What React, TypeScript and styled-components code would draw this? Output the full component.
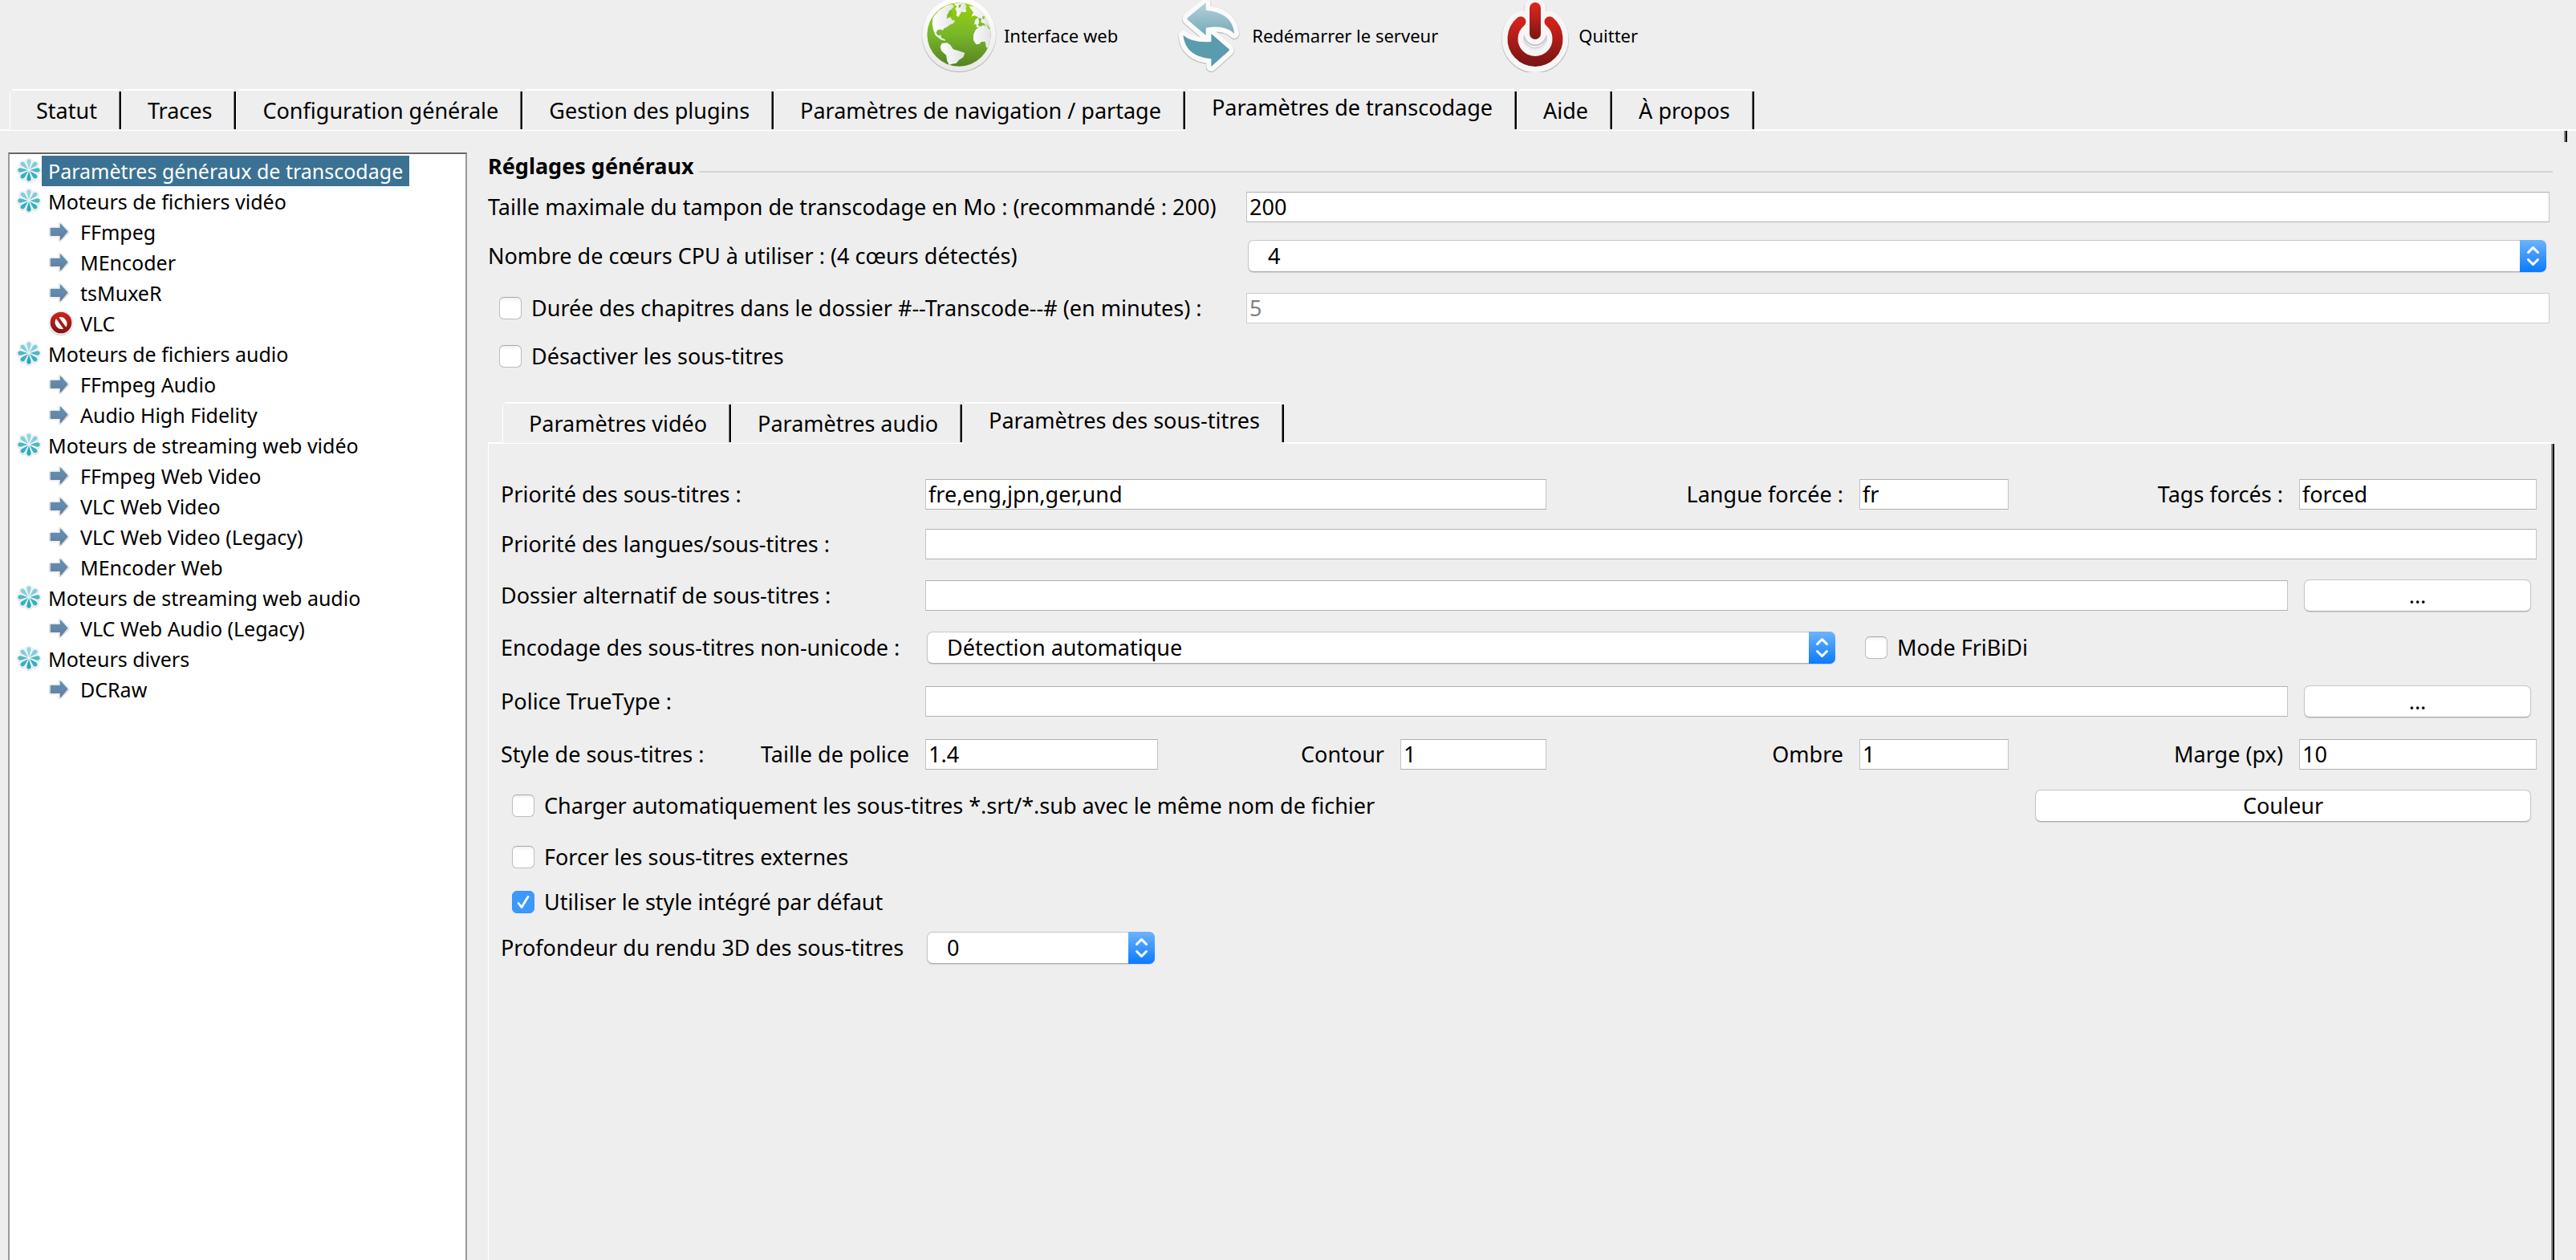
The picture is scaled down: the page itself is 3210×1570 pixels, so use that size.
import React, { useState } from "react";
import styled, { createGlobalStyle, css } from "styled-components";

const GlobalStyle = createGlobalStyle`
  *, *::before, *::after { box-sizing: border-box; }
  html, body, #root { height: 100%; margin: 0; }
  body {
    background: #eeeeee;
    color: #000;
    font-family: "Noto Sans", "Open Sans", sans-serif;
    font-size: 27px;
    line-height: 40px;
    overflow: hidden;
  }
  button, input, select { font: inherit; color: inherit; margin: 0; }
`;

const Window = styled.div`
  display: flex;
  flex-direction: column;
  height: 100vh;
`;

/* ---------- toolbar ---------- */

const Toolbar = styled.header`
  display: flex;
  justify-content: center;
  gap: 71px;
  height: 111px;
  padding-right: 22px;
`;

const ToolButton = styled.button`
  display: flex;
  align-items: center;
  gap: 8px;
  height: 90px;
  padding: 0 0 2px;
  border: 0;
  background: none;
  font-size: 22px;
  line-height: 30px;
  white-space: nowrap;

  svg { display: block; flex: none; margin-bottom: -2px; }
`;

const GlobeIcon = () => (
  <svg width="96" height="90" viewBox="24 0 288 270" aria-hidden="true">
    <defs>
      <linearGradient id="globeSea" x1="0" y1="0" x2="0" y2="1">
        <stop offset="0" stopColor="#9bd00a" />
        <stop offset="0.5" stopColor="#78b72a" />
        <stop offset="1" stopColor="#558222" />
      </linearGradient>
      <linearGradient id="globeRim" x1="0" y1="0" x2="0" y2="1">
        <stop offset="0" stopColor="#ffffff" />
        <stop offset="1" stopColor="#e9e9e9" />
      </linearGradient>
      <linearGradient id="globeLand" x1="0" y1="0" x2="1" y2="0">
        <stop offset="0" stopColor="#ffffff" />
        <stop offset="1" stopColor="#e2e2e2" />
      </linearGradient>
      <clipPath id="globeClip"><circle cx="168" cy="129" r="119" /></clipPath>
    </defs>
    <circle cx="168" cy="131" r="139" fill="#b5b5b5" />
    <circle cx="168" cy="129" r="138" fill="url(#globeRim)" />
    <circle cx="168" cy="129" r="119" fill="url(#globeSea)" />
    <g clipPath="url(#globeClip)" fill="url(#globeLand)">
      <path d="M70 66 L92 40 L122 20 L142 16 L150 24 L140 34 L134 46 L124 54 L122 70 L136 64 L142 74 L154 78 L146 88 L132 94 L122 102 L112 106 L108 114 L100 110 L88 112 L82 122 L88 132 L100 132 L102 142 L116 148 L118 152 L104 150 L92 142 L80 132 L72 112 L68 90 Z" />
      <path d="M148 14 L176 10 L192 14 L196 26 L190 38 L176 46 L166 64 L158 58 L160 44 L154 34 L160 24 Z" />
      <path d="M104 162 L124 160 L136 168 L146 184 L166 190 L190 198 L184 214 L168 224 L158 236 L138 240 L132 244 L124 228 L120 206 L102 190 L98 174 Z" />
      <path d="M180 36 L194 34 L196 44 L184 46 Z" />
      <path d="M206 22 L230 26 L262 50 L286 92 L290 140 L288 180 L270 178 L266 156 L252 156 L244 164 L232 166 L222 150 L222 130 L230 112 L242 102 L232 102 L224 94 L228 76 L240 64 L226 58 L214 62 L222 46 L212 34 Z" />
    </g>
    <g fill="#7dbb22">
      <path d="M240 66 L252 70 L250 84 L262 88 L268 98 L258 94 L248 100 L238 94 L244 84 Z" />
      <path d="M256 60 L264 62 L262 72 L256 70 Z" />
      <path d="M224 92 L232 90 L234 100 L226 100 Z" />
      <path d="M268 86 L278 98 L286 112 L278 106 Z" />
      <path d="M132 40 L142 36 L140 48 L146 58 L134 62 L126 66 L124 58 Z" />
      <path d="M168 18 L176 16 L174 26 L166 30 Z" />
    </g>
  </svg>
);

const RestartIcon = () => (
  <svg width="88" height="90" viewBox="972 0 264 270" aria-hidden="true">
    <defs>
      <linearGradient id="arrowUp" x1="0" y1="0" x2="0" y2="1">
        <stop offset="0" stopColor="#b4d2da" />
        <stop offset="1" stopColor="#74a9b8" />
      </linearGradient>
      <g id="restartShape">
        <path d="M1088 10 L1020 66 Q1017 70 1020 74 L1088 132 L1088 104 Q1162 92 1194 126 Q1188 48 1088 38 Z" />
        <path d="M1108 126 L1108 156 Q1040 162 1003 132 Q1012 212 1108 220 L1108 249 L1174 190 Q1177 186 1174 183 Z" />
      </g>
    </defs>
    <use href="#restartShape" fill="#b8b8b8" stroke="#b8b8b8" strokeWidth="39" strokeLinejoin="round" transform="translate(0 2)" />
    <use href="#restartShape" fill="#fafafa" stroke="#fafafa" strokeWidth="36" strokeLinejoin="round" />
    <path fill="url(#arrowUp)" d="M1088 10 L1020 66 Q1017 70 1020 74 L1088 132 L1088 104 Q1162 92 1194 126 Q1188 48 1088 38 Z" />
    <path fill="#5a9cad" d="M1108 126 L1108 156 Q1040 162 1003 132 Q1012 212 1108 220 L1108 249 L1174 190 Q1177 186 1174 183 Z" />
  </svg>
);

const PowerIcon = () => (
  <svg width="96" height="90" viewBox="-6 0 96 90" aria-hidden="true" fill="none" strokeLinecap="round">
    <defs>
      <linearGradient id="powerRed" gradientUnits="userSpaceOnUse" x1="0" y1="4" x2="0" y2="84">
        <stop offset="0" stopColor="#dd241b" />
        <stop offset="0.3" stopColor="#cf221b" />
        <stop offset="1" stopColor="#741414" />
      </linearGradient>
      <linearGradient id="powerStem" gradientUnits="userSpaceOnUse" x1="0" y1="4" x2="0" y2="48">
        <stop offset="0" stopColor="#e0251c" />
        <stop offset="1" stopColor="#7c1715" />
      </linearGradient>
    </defs>
    <g stroke="#bbbbbb" strokeWidth="28" transform="translate(0 1)">
      <path d="M26 27 A28 28 0 1 0 62 27" />
      <path d="M44 10 L44 42" />
    </g>
    <g stroke="#f6f6f6" strokeWidth="27">
      <path d="M26 27 A28 28 0 1 0 62 27" />
      <path d="M44 10 L44 42" />
    </g>
    <path d="M30 46 A14 14 0 0 0 58 46" stroke="#c8c8c8" strokeWidth="1" />
    <path d="M26 27 A28 28 0 1 0 62 27" stroke="url(#powerRed)" strokeWidth="13" />
    <rect x="37" y="3" width="14" height="46" rx="7" fill="url(#powerStem)" />
  </svg>
);

/* ---------- tabs ---------- */

const TabBar = styled.div`
  display: flex;
  flex: none;
  height: 52px;
`;

const TabLead = styled.span<{ $width: number }>`
  flex: 0 0 ${(p) => p.$width}px;
  border-bottom: 2px solid #fff;
`;

const Tab = styled.button<{ $selected?: boolean }>`
  flex: none;
  padding: ${(p) => (p.$selected ? "0 30px 6px 33px" : "2px 30px 0 33px")};
  border: 0;
  border-bottom: 1px solid ${(p) => (p.$selected ? "transparent" : "#fff")};
  background:
    linear-gradient(#fff, #fff) 3px 0 / calc(100% - 6px) 2px no-repeat,
    linear-gradient(#fff, #fff) 0 3px / 1px 100% no-repeat,
    linear-gradient(#000, #000) 100% 3px / 2px calc(100% - 4px) no-repeat,
    linear-gradient(#777, #777) calc(100% - 2px) 3px / 1px calc(100% - 4px) no-repeat;
  white-space: nowrap;
`;

const TabFill = styled.span`
  flex: 1;
  border-bottom: 2px solid #fff;
`;

const PaneEdge = styled.div`
  flex: none;
  align-self: flex-end;
  width: 4px;
  height: 14px;
  margin-right: 11px;
  background: linear-gradient(90deg, #8c8c8c 50%, #000 50%);
`;

/* ---------- tree ---------- */

const Body = styled.div`
  display: flex;
  flex: 1;
  min-height: 0;
  padding: 13px 27px 0 10px;
`;

const Tree = styled.ul`
  flex: 0 0 572px;
  margin: 0;
  padding: 2px 0 0 8px;
  list-style: none;
  background: #fff;
  border: 2px solid #999;
  border-top-color: #666;
  border-bottom: 0;
  font-size: 25px;
  line-height: 38px;
`;

const TreeItem = styled.li<{ $child?: boolean }>`
  display: flex;
  align-items: center;
  height: 38px;
  padding-left: ${(p) => (p.$child ? 40 : 0)}px;

  svg { flex: none; }
`;

const TreeLabel = styled.button<{ $selected?: boolean }>`
  height: 38px;
  padding: 0 8px;
  border: 0;
  background: none;
  white-space: nowrap;
  ${(p) =>
    p.$selected &&
    css`
      background: #3b7293;
      color: #fff;
    `}
`;

const FlowerIcon = () => (
  <svg width="32" height="38" viewBox="0 0 96 114" aria-hidden="true">
    <defs>
      <g id="flowerPetals">
        {[0, 45, 90, 135, 180, 225, 270, 315].map((a) => (
          <path key={a} transform={`rotate(${a} 48 54)`} d="M48 50 L40 24 Q39 13 48 13 Q57 13 56 24 Z" />
        ))}
      </g>
    </defs>
    <use href="#flowerPetals" fill="#d2d2d2" stroke="#d2d2d2" strokeWidth="11" strokeLinejoin="round" transform="translate(0 1)" />
    <use href="#flowerPetals" fill="#f6f6f6" stroke="#f6f6f6" strokeWidth="9" strokeLinejoin="round" />
    <path d="M48 50 L40 24 Q39 13 48 13 Q57 13 56 24 Z" fill="#93d6df" />
    <path transform="rotate(45 48 54)" d="M48 50 L40 24 Q39 13 48 13 Q57 13 56 24 Z" fill="#7fcfda" />
    <path transform="rotate(315 48 54)" d="M48 50 L40 24 Q39 13 48 13 Q57 13 56 24 Z" fill="#7fcfda" />
    <path transform="rotate(90 48 54)" d="M48 50 L40 24 Q39 13 48 13 Q57 13 56 24 Z" fill="#4bb9c8" />
    <path transform="rotate(270 48 54)" d="M48 50 L40 24 Q39 13 48 13 Q57 13 56 24 Z" fill="#4bb9c8" />
    <path transform="rotate(135 48 54)" d="M48 50 L40 24 Q39 13 48 13 Q57 13 56 24 Z" fill="#35b1c2" />
    <path transform="rotate(225 48 54)" d="M48 50 L40 24 Q39 13 48 13 Q57 13 56 24 Z" fill="#35b1c2" />
    <path transform="rotate(180 48 54)" d="M48 50 L40 24 Q39 13 48 13 Q57 13 56 24 Z" fill="#27aabe" />
  </svg>
);

const ArrowIcon = () => (
  <svg width="32" height="38" viewBox="0 0 96 114" aria-hidden="true">
    <defs>
      <linearGradient id="engineArrow" x1="0" y1="0" x2="0" y2="1">
        <stop offset="0" stopColor="#5d92b4" />
        <stop offset="0.5" stopColor="#6389ab" />
        <stop offset="1" stopColor="#627a9c" />
      </linearGradient>
    </defs>
    <path d="M9 43 H44 V27 L74 57 L44 87 V71 H9 Z" fill="#c4c4c4" stroke="#c4c4c4" strokeWidth="10" strokeLinejoin="round" />
    <path d="M9 42 H44 V27 L74 56 L44 86 V71 H9 Z" fill="#fff" stroke="#fff" strokeWidth="7" strokeLinejoin="round" />
    <path d="M8 43 Q8 41 10 41 H44 V27 Q46 25 48 27 L73 54 Q75 56 73 58 L48 86 Q46 88 44 86 V72 H10 Q8 72 8 70 Z" fill="url(#engineArrow)" />
  </svg>
);

const ForbiddenIcon = () => (
  <svg width="32" height="38" viewBox="0 0 96 114" aria-hidden="true">
    <defs>
      <linearGradient id="forbidden" x1="0" y1="0" x2="0" y2="1">
        <stop offset="0" stopColor="#d0241c" />
        <stop offset="1" stopColor="#7d1515" />
      </linearGradient>
    </defs>
    <circle cx="48" cy="56" r="46" fill="#cfcfcf" />
    <circle cx="48" cy="54" r="45" fill="#f5f5f5" />
    <circle cx="48" cy="54" r="40" fill="url(#forbidden)" />
    <path d="M40 34 A25 25 0 0 1 67 71 Z M30 39 A25 25 0 0 0 57 77 Z" fill="#fff" />
  </svg>
);

type Kind = "group" | "engine" | "off";

const treeIcons: Record<Kind, () => React.JSX.Element> = {
  group: FlowerIcon,
  engine: ArrowIcon,
  off: ForbiddenIcon,
};

const treeRows: [Kind, string][] = [
  ["group", "Paramètres généraux de transcodage"],
  ["group", "Moteurs de fichiers vidéo"],
  ["engine", "FFmpeg"],
  ["engine", "MEncoder"],
  ["engine", "tsMuxeR"],
  ["off", "VLC"],
  ["group", "Moteurs de fichiers audio"],
  ["engine", "FFmpeg Audio"],
  ["engine", "Audio High Fidelity"],
  ["group", "Moteurs de streaming web vidéo"],
  ["engine", "FFmpeg Web Video"],
  ["engine", "VLC Web Video"],
  ["engine", "VLC Web Video (Legacy)"],
  ["engine", "MEncoder Web"],
  ["group", "Moteurs de streaming web audio"],
  ["engine", "VLC Web Audio (Legacy)"],
  ["group", "Moteurs divers"],
  ["engine", "DCRaw"],
];

/* ---------- form parts ---------- */

const Main = styled.main`
  display: flex;
  flex: 1;
  flex-direction: column;
  min-width: 0;
  margin-left: 26px;
`;

const Separator = styled.div`
  display: flex;
  align-items: center;
  gap: 6px;
  height: 34px;
  margin: 0 2px 14px 0;

  &::after {
    content: "";
    flex: 1;
    height: 2px;
    margin-top: 14px;
    background: #d3d3d3;
  }
`;

const SectionTitle = styled.h2`
  margin: 0;
  font-size: 27px;
  font-weight: 700;
  line-height: 34px;
`;

const GeneralGrid = styled.div`
  display: grid;
  grid-template-columns: 945px 1fr;
  grid-template-rows: 61px 65px 60px 77px;
  margin-right: 6px;
  align-items: start;
`;

const SubtitleGrid = styled.div`
  display: grid;
  grid-template-columns: 529px 290fr 302fr 182fr 390fr 186fr 27fr 335fr 296fr;
  grid-template-rows: 62px 64px 65px 67px 66px 64px 64px 56px 57px 40px;
  align-items: start;
`;

interface Span {
  $from?: number;
  $span?: number;
}

const placed = css<Span>`
  grid-column: ${(p) => p.$from ?? "auto"} / span ${(p) => p.$span ?? 1};
`;

const Label = styled.label<Span & { $right?: boolean }>`
  ${placed}
  white-space: nowrap;
  ${(p) => p.$right && "justify-self: end; padding-right: 20px;"}
`;

const LabelPair = styled.div<Span>`
  ${placed}
  display: flex;
  justify-content: space-between;
  padding-right: 20px;
  white-space: nowrap;
`;

const TextField = styled.input<Span & { $beforeButton?: boolean }>`
  ${placed}
  justify-self: stretch;
  min-width: 0;
  height: 38px;
  margin-top: 1px;
  margin-right: ${(p) => (p.$beforeButton ? 14 : 0)}px;
  padding: 0 4px 0 3px;
  border: 1px solid #b0b0b0;
  border-left-color: #c4c4c4;
  border-right-color: #c4c4c4;
  border-radius: 0;
  background: #fff;
  outline: none;

  &:disabled {
    border-color: #cecece;
    color: #808080;
    opacity: 1;
  }
`;

const raised = css`
  height: 40px;
  border: 1px solid #c6c6c6;
  border-bottom-color: #acacac;
  border-radius: 7px;
  background: #fff;
  box-shadow: 0 1px 1px rgba(0, 0, 0, 0.12);
`;

const SelectFrame = styled.span<Span & { $end?: number }>`
  ${placed}
  position: relative;
  display: block;
  margin: 0 ${(p) => p.$end ?? 4}px 0 2px;
`;

const SelectBox = styled.select`
  ${raised}
  display: block;
  width: 100%;
  padding: 0 44px 0 24px;
  line-height: 36px;
  appearance: none;
  outline: none;
`;

const Stepper = styled.svg`
  position: absolute;
  top: 0;
  right: 0;
  width: 33px;
  height: 40px;
  border-radius: 0 7px 7px 0;
  background: linear-gradient(#6db3fb, #3b97fd 50%, #0a7aff);
  pointer-events: none;
`;

const PushButton = styled.button<Span>`
  ${raised}
  ${placed}
  margin: 0 7px 0 6px;
  padding: 0;
  line-height: 38px;
`;

const CheckLabel = styled.label<Span & { $inset?: number }>`
  ${placed}
  display: flex;
  align-items: center;
  gap: 12px;
  height: 40px;
  padding-left: ${(p) => p.$inset ?? 14}px;
  white-space: nowrap;
`;

const CheckBox = styled.input.attrs({ type: "checkbox" })`
  flex: none;
  width: 28px;
  height: 28px;
  appearance: none;
  border: 1px solid #bcbcbc;
  border-top-color: #a6a6a6;
  border-radius: 6px;
  background: linear-gradient(#f1f1f1, #fff 20%);

  &:checked {
    border-color: #3a93fb;
    background:
      url("data:image/svg+xml,%3Csvg xmlns='http://www.w3.org/2000/svg' viewBox='0 0 26 26'%3E%3Cpath d='M7 14.5 L11 19.5 L19 6.5' fill='none' stroke='white' stroke-width='2.8' stroke-linecap='round' stroke-linejoin='round'/%3E%3C/svg%3E") center / 26px 26px no-repeat,
      #3b99fc;
  }
`;

const Combo = ({ id, options, ...place }: { id: string; options: string[]; $end?: number } & Span) => (
  <SelectFrame {...place}>
    <SelectBox id={id} defaultValue={options[0]}>
      {options.map((o) => (
        <option key={o}>{o}</option>
      ))}
    </SelectBox>
    <Stepper viewBox="0 0 33 40" fill="none" stroke="#fff" strokeWidth="3" strokeLinecap="round" strokeLinejoin="round">
      <path d="M10.500 15.500 L16.500 9.500 L22.500 15.500 M10.500 24.500 L16.500 30.500 L22.500 24.500" />
    </Stepper>
  </SelectFrame>
);

const Check = ({ text, checked, ...place }: { text: string; checked?: boolean; $inset?: number } & Span) => (
  <CheckLabel {...place}>
    <CheckBox defaultChecked={checked} />
    {text}
  </CheckLabel>
);

const SubPane = styled.section`
  flex: 1;
  min-height: 0;
  padding: 43px 22px 0 15px;
  border-left: 1px solid #fff;
  background: linear-gradient(90deg, #8c8c8c 50%, #000 50%) 100% 0 / 4px 100% no-repeat;
`;

const mainTabs = [
  "Statut",
  "Traces",
  "Configuration générale",
  "Gestion des plugins",
  "Paramètres de navigation / partage",
  "Paramètres de transcodage",
  "Aide",
  "À propos",
];

const subTabs = ["Paramètres vidéo", "Paramètres audio", "Paramètres des sous-titres"];

const Tabs = ({ items, initial, lead }: { items: string[]; initial: number; lead: number }) => {
  const [current, setCurrent] = useState(initial);
  return (
    <TabBar role="tablist">
      <TabLead $width={lead} />
      {items.map((name, i) => (
        <Tab
          key={name}
          type="button"
          role="tab"
          aria-selected={i === current}
          $selected={i === current}
          onClick={() => setCurrent(i)}
        >
          {name}
        </Tab>
      ))}
      <TabFill />
    </TabBar>
  );
};

export default function App() {
  const [selected, setSelected] = useState(0);
  return (
    <Window>
      <GlobalStyle />
      <Toolbar>
        <ToolButton type="button"><GlobeIcon />Interface web</ToolButton>
        <ToolButton type="button"><RestartIcon />Redémarrer le serveur</ToolButton>
        <ToolButton type="button"><PowerIcon />Quitter</ToolButton>
      </Toolbar>
      <Tabs items={mainTabs} initial={5} lead={12} />
      <PaneEdge />
      <Body>
        <Tree>
          {treeRows.map(([kind, name], i) => {
            const Icon = treeIcons[kind];
            return (
              <TreeItem key={name} $child={kind !== "group"}>
                <Icon />
                <TreeLabel type="button" $selected={i === selected} onClick={() => setSelected(i)}>
                  {name}
                </TreeLabel>
              </TreeItem>
            );
          })}
        </Tree>
        <Main>
          <Separator>
            <SectionTitle>Réglages généraux</SectionTitle>
          </Separator>
          <GeneralGrid>
            <Label htmlFor="buffer">Taille maximale du tampon de transcodage en Mo : (recommandé : 200)</Label>
            <TextField id="buffer" defaultValue="200" />
            <Label htmlFor="cores">Nombre de cœurs CPU à utiliser : (4 cœurs détectés)</Label>
            <Combo id="cores" options={["4", "3", "2", "1"]} />
            <Check text="Durée des chapitres dans le dossier #--Transcode--# (en minutes) :" />
            <TextField aria-label="Durée des chapitres" defaultValue="5" disabled />
            <Check text="Désactiver les sous-titres" $span={2} />
          </GeneralGrid>
          <Tabs items={subTabs} initial={2} lead={18} />
          <SubPane>
            <SubtitleGrid>
              <Label htmlFor="prio">Priorité des sous-titres :</Label>
              <TextField id="prio" defaultValue="fre,eng,jpn,ger,und" $span={3} />
              <Label htmlFor="lang" $right>Langue forcée :</Label>
              <TextField id="lang" defaultValue="fr" />
              <Label htmlFor="tags" $right $span={2}>Tags forcés :</Label>
              <TextField id="tags" defaultValue="forced" />

              <Label htmlFor="langprio">Priorité des langues/sous-titres :</Label>
              <TextField id="langprio" $span={8} />

              <Label htmlFor="altdir">Dossier alternatif de sous-titres :</Label>
              <TextField id="altdir" $span={7} $beforeButton />
              <PushButton type="button">...</PushButton>

              <Label htmlFor="charset">Encodage des sous-titres non-unicode :</Label>
              <Combo id="charset" options={["Détection automatique"]} $span={4} $end={30} />
              <Check text="Mode FriBiDi" $from={6} $span={4} $inset={7} />

              <Label htmlFor="font">Police TrueType :</Label>
              <TextField id="font" $span={7} $beforeButton />
              <PushButton type="button">...</PushButton>

              <LabelPair>
                <span>Style de sous-titres :</span>
                <label htmlFor="scale">Taille de police</label>
              </LabelPair>
              <TextField id="scale" defaultValue="1.4" />
              <Label htmlFor="outline" $right>Contour</Label>
              <TextField id="outline" defaultValue="1" />
              <Label htmlFor="shadow" $right>Ombre</Label>
              <TextField id="shadow" defaultValue="1" />
              <Label htmlFor="margin" $right $span={2}>Marge (px)</Label>
              <TextField id="margin" defaultValue="10" />

              <Check text="Charger automatiquement les sous-titres *.srt/*.sub avec le même nom de fichier" $span={7} />
              <PushButton type="button" $from={8} $span={2}>Couleur</PushButton>

              <Check text="Forcer les sous-titres externes" $span={9} />
              <Check text="Utiliser le style intégré par défaut" checked $span={9} />

              <Label htmlFor="depth">Profondeur du rendu 3D des sous-titres</Label>
              <Combo id="depth" options={["0"]} />
            </SubtitleGrid>
          </SubPane>
        </Main>
      </Body>
    </Window>
  );
}
